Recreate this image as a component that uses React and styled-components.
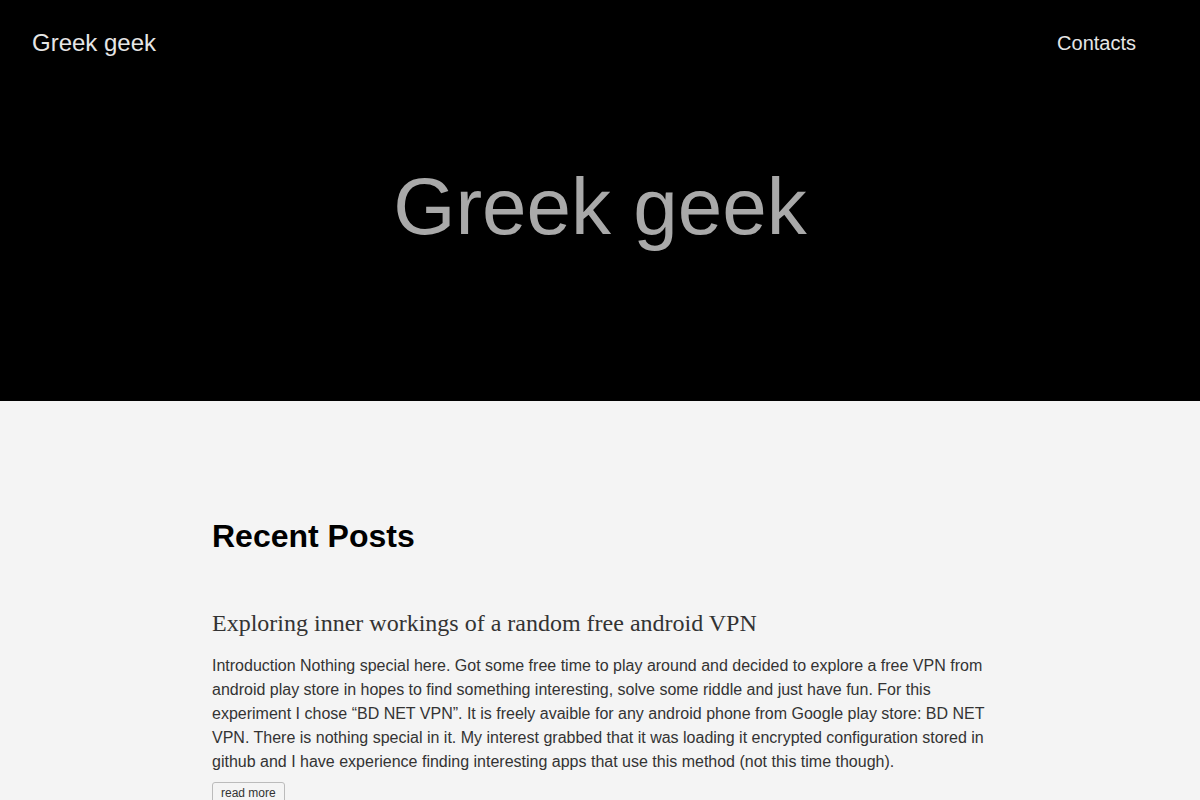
import React from "react";
import styled, { createGlobalStyle } from "styled-components";

const GlobalStyle = createGlobalStyle`
  html, body {
    margin: 0;
    padding: 0;
    background: #f4f4f4;
    font-family: "Liberation Sans", Arial, sans-serif;
  }
  * { box-sizing: border-box; }
`;

const posts = [
  {
    title: "Exploring inner workings of a random free android VPN",
    excerpt:
      "Introduction Nothing special here. Got some free time to play around and decided to explore a free VPN from android play store in hopes to find something interesting, solve some riddle and just have fun. For this experiment I chose “BD NET VPN”. It is freely avaible for any android phone from Google play store: BD NET VPN. There is nothing special in it. My interest grabbed that it was loading it encrypted configuration stored in github and I have experience finding interesting apps that use this method (not this time though).",
  },
];

const App = () => {
  return (
    <>
      <GlobalStyle />
      <Header>
        <NavBar>
          <Brand href="#">Greek geek</Brand>
          <NavLink href="#">Contacts</NavLink>
        </NavBar>
        <Hero>
          <HeroTitle>Greek geek</HeroTitle>
        </Hero>
      </Header>
      <Main>
        <Container>
          <SectionTitle>Recent Posts</SectionTitle>
          {posts.map((p, i) => (
            <Post key={i}>
              <PostTitle>{p.title}</PostTitle>
              <Excerpt>{p.excerpt}</Excerpt>
              <ReadMore>read more</ReadMore>
            </Post>
          ))}
        </Container>
      </Main>
    </>
  );
};

export default App;

const Header = styled.header`
  display: flex;
  flex-direction: column;
  height: 401px;
  background: #000;
`;

const NavBar = styled.nav`
  display: flex;
  justify-content: space-between;
  align-items: center;
  height: 86px;
  padding: 0 64px 0 32px;
`;

const Brand = styled.a`
  color: #e6e6e6;
  font-size: 24px;
  text-decoration: none;
`;

const NavLink = styled.a`
  color: #e6e6e6;
  font-size: 20px;
  text-decoration: none;
`;

const Hero = styled.div`
  display: flex;
  justify-content: center;
  padding-top: 68px;
`;

const HeroTitle = styled.h1`
  margin: 0;
  font-size: 80px;
  font-weight: 400;
  line-height: 106px;
  color: #a9a9a9;
`;

const Main = styled.main`
  background: #f4f4f4;
  padding-top: 114px;
`;

const Container = styled.div`
  width: 776px;
  margin: 0 auto;
`;

const SectionTitle = styled.h2`
  margin: 0 0 48px;
  font-size: 32px;
  font-weight: 700;
  line-height: 42px;
  color: #000;
`;

const Post = styled.article`
  display: flex;
  flex-direction: column;
  align-items: flex-start;
`;

const PostTitle = styled.h3`
  margin: 1px 0 14px;
  font-family: "Liberation Serif", "Times New Roman", serif;
  font-size: 24px;
  font-weight: 400;
  line-height: 34px;
  color: #333;
`;

const Excerpt = styled.p`
  margin: 0 0 8px;
  font-size: 16px;
  line-height: 24px;
  color: #333;
`;

const ReadMore = styled.button`
  font-family: "Liberation Sans", Arial, sans-serif;
  font-size: 12px;
  color: #333;
  background: #f4f4f4;
  border: 1px solid #bbb;
  border-radius: 3px;
  padding: 3px 8px;
`;
